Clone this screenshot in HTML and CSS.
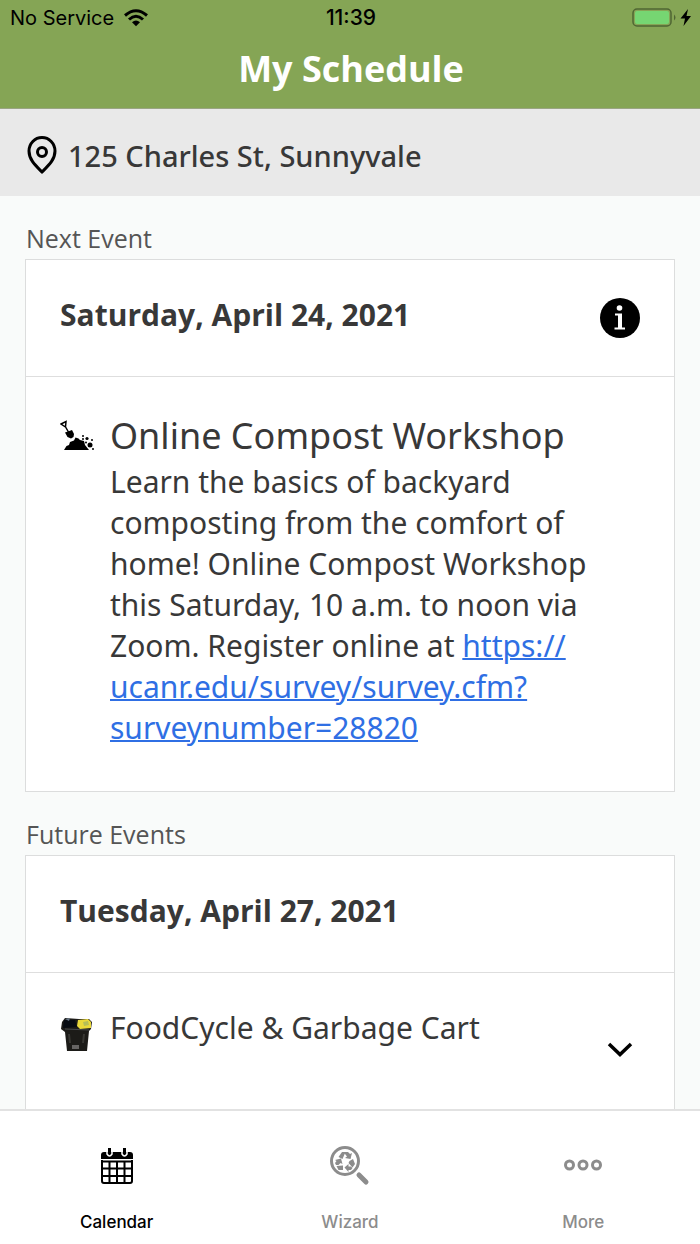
FILE: index.html
```html
<!DOCTYPE html>
<html lang="en">
<head>
  <meta charset="UTF-8">
  <meta name="viewport" content="width=device-width, initial-scale=1.0">
  <title>My Schedule</title>
  <link rel="stylesheet" href="styles.css">
</head>
<body>

<header class="top">
  <div class="status">
    <div class="status-left">
      <span>No Service</span>
      <svg width="24" height="18" viewBox="0 0 24 18" aria-hidden="true">
        <path d="M1 6.500Q12-3 23 6.500" fill="none" stroke="#000" stroke-width="3"/>
        <path d="M5 10.500Q12 4 19 10.500" fill="none" stroke="#000" stroke-width="3"/>
        <path d="M8 13.200Q12 9.600 16 13.200L12 17.200z"/>
      </svg>
    </div>
    <time class="clock">11:39</time>
    <div class="status-right">
      <svg width="60" height="20" viewBox="0 0 60 20" aria-hidden="true">
        <rect x="1" y="1" width="38" height="17" rx="4" fill="none" stroke="#4f6533" stroke-width="1.500"/>
        <rect x="3" y="3" width="34" height="13" rx="2" fill="#76d672"/>
        <path d="M42 6.500Q45 9.500 42 12.500z" fill="#4f6533"/>
        <path d="M56 1L48.500 10.500H53L51.500 18L59 8H54.500z"/>
      </svg>
    </div>
  </div>
  <h1>My Schedule</h1>
</header>

<div class="address">
  <svg width="32" height="40" viewBox="0 0 32 40" fill="none" stroke="#000" aria-hidden="true">
    <path d="M16 37C10 31 3 25 3 16A13 13.500 0 0 1 29 16C29 25 22 31 16 37z" stroke-width="3"/>
    <circle cx="16" cy="17" r="4.500" stroke-width="3"/>
  </svg>
  <span>125 Charles St, Sunnyvale</span>
</div>

<main>
  <!-- Next event -->
  <section>
    <h2>Next Event</h2>
    <div class="card">
      <div class="card-head">
        <h3>Saturday, April 24, 2021</h3>
        <button class="icon-btn" aria-label="Event information">
          <svg width="40" height="40" viewBox="0 0 40 40">
            <circle cx="20" cy="20" r="20"/>
            <circle cx="19.500" cy="10" r="2.800" fill="#fff"/>
            <path d="M15 15.500H22V29.500H25V31.500H14.500V29.500H18V17.500H15z" fill="#fff"/>
          </svg>
        </button>
      </div>
      <div class="card-body">
        <svg class="event-icon" width="34" height="34" viewBox="0 0 34 34" aria-hidden="true">
          <path d="M1 4L6 1.500L5.500 7zM5 6L9 13" fill="none" stroke="#000" stroke-width="1.500"/>
          <path d="M5 12.500L8 11.500L12 10L14 14L13.500 17L11 18.500L7.500 17z"/>
          <path d="M4 30L6.500 26L9 25L10 22L14 20.500L15.500 17.500L18.500 18.500L20 20L24 21L25 25L29 30z"/>
          <circle cx="30" cy="25" r="2.500"/>
          <circle cx="27" cy="18.500" r="1.600"/>
          <circle cx="23" cy="16" r="1"/>
          <circle cx="23" cy="19" r="1"/>
          <circle cx="26" cy="22.500" r="1"/>
          <circle cx="32" cy="20" r="1"/>
          <circle cx="33" cy="29" r="1"/>
        </svg>
        <div class="event-text">
          <h4 class="big">Online Compost Workshop</h4>
          <p>Learn the basics of backyard composting from the comfort of home! Online Compost Workshop this Saturday, 10 a.m. to noon via Zoom. Register online at <a href="https://ucanr.edu/survey/survey.cfm?surveynumber=28820">https://<wbr>ucanr.edu/survey/survey.cfm?<wbr>surveynumber=28820</a></p>
        </div>
      </div>
    </div>
  </section>

  <!-- Future events -->
  <section>
    <h2>Future Events</h2>
    <div class="card">
      <div class="card-head">
        <h3>Tuesday, April 27, 2021</h3>
      </div>
      <div class="card-body">
        <svg class="event-icon" width="34" height="38" viewBox="0 0 34 38" aria-hidden="true">
          <path d="M2 6L5 2L19 3L29 3L32 6L31 13L29 15L27 35H7L5 16L1 13z" fill="#1c1b18"/>
          <path d="M4 4L15 4L17 11L3 12z" fill="#070b12"/>
          <path d="M5 13L29 14" stroke="#45484a" stroke-width="1" fill="none"/>
          <path d="M18 4L28 3L31 6V12L20 13L17 10z" fill="#e9d83b"/>
          <path d="M23 6L28 5L29 9L24 10z" fill="#b4bd58"/>
          <path d="M5 3L10 2L9 5z" fill="#657483"/>
          <path d="M12 29H19V33H12z" fill="#666463"/>
          <path d="M9 18L10 27M24 18L23 27" stroke="#383733" stroke-width="2"/>
        </svg>
        <div class="event-text">
          <h4>FoodCycle &amp; Garbage Cart</h4>
        </div>
        <button class="icon-btn expand" aria-label="Show event details">
          <svg width="40" height="40" viewBox="0 0 40 40">
            <path d="M9 15L20 25.500L31 15" fill="none" stroke="#000" stroke-width="3.500"/>
          </svg>
        </button>
      </div>
    </div>
  </section>
</main>

<nav>
  <a class="active" href="#calendar">
    <svg width="40" height="40" viewBox="0 0 40 40" aria-hidden="true">
      <path d="M4 13V9Q4 6 7 6H33Q36 6 36 9V13z"/>
      <path d="M5 14V35Q5 37 7 37H33Q35 37 35 35V14M4 15.500H36M5 22.500H35M5 30H35M12.500 15V37M20 15V37M27.500 15V37" fill="none" stroke="#000" stroke-width="2"/>
      <path d="M10 6V8Q12.500 12 15 8V6M25 6V8Q27.500 12 30 8V6" fill="none" stroke="#fff" stroke-width="1.500"/>
      <path d="M12.500 2V8M27.500 2V8" fill="none" stroke="#000" stroke-width="3"/>
    </svg>
    <span>Calendar</span>
  </a>
  <a href="#wizard">
    <svg width="40" height="40" viewBox="0 0 40 40" aria-hidden="true">
      <circle cx="15" cy="15" r="13.500" fill="none" stroke="#8c8c8c" stroke-width="3"/>
      <path d="M29 29L36 36" stroke="#8c8c8c" stroke-width="5" stroke-linecap="round"/>
      <g fill="#8c8c8c">
        <path d="M8.500 11L12 6H15.500L12.500 13zM13.500 6H18L20 8L22 7L20.500 13L15 12L17 10.500z"/>
        <path d="M19.500 15L23 13L25 18L22.500 21.500L18.500 17zM22.500 22L21 24H18.500V26L14.500 21.500L18.500 18V20.500H21z"/>
        <path d="M13 19.500V24H8.500L6.500 20zM6 19L5 17L6.500 15L5 14L11 12.500L12.500 18L10.500 17L8.500 19z"/>
      </g>
    </svg>
    <span>Wizard</span>
  </a>
  <a href="#more">
    <svg width="40" height="40" viewBox="0 0 40 40" fill="none" stroke="#8c8c8c" stroke-width="3" aria-hidden="true">
      <circle cx="6.500" cy="19" r="4"/>
      <circle cx="20" cy="19" r="4"/>
      <circle cx="33.500" cy="19" r="4"/>
    </svg>
    <span>More</span>
  </a>
</nav>

</body>
</html>
```
FILE: styles.css
```css
* {
  box-sizing: border-box;
}
body {
  display: flex;
  flex-direction: column;
  height: 100vh;
  margin: 0;
  font-family: "Open Sans", "Noto Sans", sans-serif;
  color: #383838;
  background: #f9fbfa;
}
h1, h2, h3, h4, p {
  margin: 0;
}
svg {
  display: block;
  flex: none;
}

/* header */
.top {
  flex: none;
  padding: 5px 8px 14px 10px;
  background: #85a555;
  border-bottom: 1px solid #9aa583;
}
.status {
  display: grid;
  grid-template-columns: 1fr auto 1fr;
  align-items: center;
  height: 25px;
  font-family: Inter, sans-serif;
  font-size: 20px;
  color: #000;
}
.status-left {
  display: flex;
  align-items: center;
  gap: 10px;
}
.status-right {
  justify-self: end;
}
.clock {
  font-size: 21px;
  font-weight: 500;
}
h1 {
  padding-top: 14px;
  font-size: 36px;
  line-height: 50px;
  text-align: center;
  color: #fff;
}
.address {
  display: flex;
  flex: none;
  align-items: center;
  gap: 10px;
  padding: 24px 26px 20px;
  font-family: "Noto Sans", "Open Sans", sans-serif;
  font-size: 29px;
  font-weight: 500;
  line-height: 40px;
  background: #e9e9e9;
}
.address span {
  padding-top: 3px;
}

/* events */
main {
  flex: 1;
  min-height: 0;
  overflow-y: auto;
  scrollbar-width: none;
  padding: 0 25px;
}
h2 {
  padding: 25px 1px 3px;
  font-size: 25px;
  font-weight: 400;
  line-height: 35px;
  color: #555;
}
.card {
  background: #fff;
  border: 1px solid #dcdddd;
}
.card-head {
  display: flex;
  align-items: center;
  justify-content: space-between;
  height: 117px;
  padding: 0 34px;
  border-bottom: 1px solid #dedede;
}
h3 {
  padding-bottom: 6px;
  font-size: 30px;
  line-height: 42px;
}
.icon-btn {
  padding: 0;
  border: none;
  background: none;
  cursor: pointer;
}
.card-body {
  display: flex;
  gap: 16px;
  padding: 34px 34px 43px;
}
.event-icon {
  margin-top: 9px;
}
.event-text {
  flex: 1;
  font-family: "Noto Sans", "Open Sans", sans-serif;
  font-size: 30px;
  line-height: 41px;
}
h4 {
  font-size: 30px;
  font-weight: 400;
}
h4.big {
  font-size: 36px;
  line-height: 50px;
}
a {
  color: #2f6fe4;
  text-decoration-thickness: 2px;
}
.expand {
  align-self: flex-start;
  margin-top: 22px;
}

/* tab bar */
nav {
  display: flex;
  flex: none;
  height: 135px;
  border-top: 2px solid #e2e2e2;
  background: #fff;
}
nav a {
  display: flex;
  flex: 1;
  flex-direction: column;
  align-items: center;
  gap: 25px;
  padding-top: 35px;
  font-family: Inter, sans-serif;
  font-size: 17px;
  font-weight: 500;
  line-height: 22px;
  color: #8c8c8c;
  text-decoration: none;
}
nav .active {
  color: #000;
}
```
